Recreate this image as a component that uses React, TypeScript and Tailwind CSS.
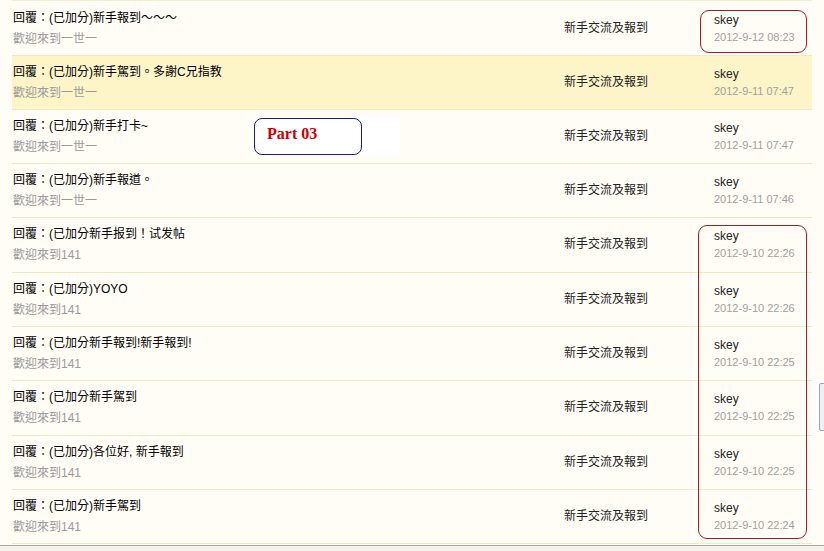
import React from 'react';

const rows = [
  { title: '回覆：(已加分)新手報到～～～', sub: '歡迎來到一世一', date: '2012-9-12 08:23' },
  { title: '回覆：(已加分)新手駕到。多謝C兄指教', sub: '歡迎來到一世一', date: '2012-9-11 07:47', hl: true },
  { title: '回覆：(已加分)新手打卡~', sub: '歡迎來到一世一', date: '2012-9-11 07:47' },
  { title: '回覆：(已加分)新手報道。', sub: '歡迎來到一世一', date: '2012-9-11 07:46' },
  { title: '回覆：(已加分新手报到！试发帖', sub: '歡迎來到141', date: '2012-9-10 22:26', tall: true },
  { title: '回覆：(已加分)YOYO', sub: '歡迎來到141', date: '2012-9-10 22:26' },
  { title: '回覆：(已加分新手報到!新手報到!', sub: '歡迎來到141', date: '2012-9-10 22:25' },
  { title: '回覆：(已加分新手駕到', sub: '歡迎來到141', date: '2012-9-10 22:25', tall: true },
  { title: '回覆：(已加分)各位好, 新手報到', sub: '歡迎來到141', date: '2012-9-10 22:25' },
  { title: '回覆：(已加分)新手駕到', sub: '歡迎來到141', date: '2012-9-10 22:24' },
];

const cjk = { fontFamily: '"Liberation Sans", "Noto Sans CJK TC", sans-serif' };

export default function App() {
  return (
    <div className="relative w-[824px] h-[551px] overflow-hidden bg-[#fffdf6] flex flex-col" style={cjk}>
      <div className="ml-[12px] w-[800px] pt-[1px] border-t border-[#f5edcf] flex flex-col">
        {rows.map((r, i) => (
          <div
            key={i}
            className={`flex border-b border-[#f3e8c4] ${r.tall ? 'h-[55px]' : 'h-[54px]'} ${r.hl ? 'bg-[#fdf4c8]' : ''}`}
          >
            <div className="w-[540px] pl-[1px] pt-[8px] flex flex-col gap-[5px]">
              <div className="text-[12px] leading-[16px] text-black">{r.title}</div>
              <div className="text-[12px] leading-[16px] text-[#9a9a9a]">{r.sub}</div>
            </div>
            <div className="w-[150px] pl-[12px] flex items-center text-[12px] text-[#222] pb-[2px]">
              新手交流及報到
            </div>
            <div className="pt-[10px] pl-[12px] flex flex-col gap-[2px]">
              <div className="text-[12px] leading-[16px] text-[#222]">skey</div>
              <div className="text-[11px] leading-[14px] text-[#a0a0a0]">{r.date}</div>
            </div>
          </div>
        ))}
      </div>

      {/* bottom window border */}
      <div className="mt-auto h-[6px] bg-[#f4f2ea] border-t border-[#a9a79e]" />

      {/* side tab at right edge */}
      <div className="absolute left-[819px] top-[383px] w-[10px] h-[48px] bg-[#eef0f4] border border-[#9aa4b8] rounded-[2px]" />

      {/* annotation marks */}
      <div className="absolute left-[700px] top-[10px] w-[107px] h-[43px] border border-[#a01c2c] rounded-[9px]" />
      <div className="absolute left-[698px] top-[225px] w-[109px] h-[314px] border border-[#a01c2c] rounded-[9px]" />
      <div className="absolute left-[254px] top-[118px] w-[146px] h-[37px] bg-white flex">
        <div
          className="w-[108px] h-[37px] border border-[#1c1c78] rounded-[8px] pl-[12px] pt-[3px] text-[16px] font-bold text-[#cc0000]"
          style={{ fontFamily: '"Liberation Serif", serif' }}
        >
          Part 03
        </div>
      </div>
    </div>
  );
}
